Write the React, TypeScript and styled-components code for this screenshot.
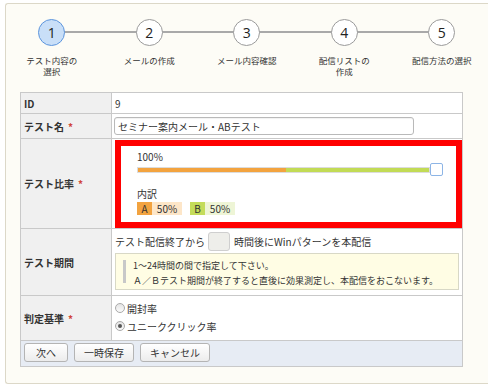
import React from "react";
import styled, { createGlobalStyle } from "styled-components";

const Global = createGlobalStyle`
  html, body { margin: 0; padding: 0; background: #ffffff; overflow: hidden; }
  body {
    font-family: "Noto Sans CJK JP", "Noto Sans", sans-serif;
    color: #333333;
  }
  * { box-sizing: border-box; }
`;

const Panel = styled.div`
  margin: 3px 0 0 5px;
  width: 483px;
  height: 381px;
  border: 1px solid #dcd8c8;
  border-right: none;
  border-radius: 3px 0 0 3px;
  background: #fdfcf6;
`;

const Steps = styled.ol`
  list-style: none;
  margin: 0 0 0 -3px;
  padding: 14.5px 0 0;
  height: 88px;
  display: grid;
  grid-template-columns: repeat(5, 97.5px);
`;

const Step = styled.li<{ $last?: boolean }>`
  position: relative;
  display: flex;
  flex-direction: column;
  align-items: center;
  &::after {
    content: "";
    display: ${(p) => (p.$last ? "none" : "block")};
    position: absolute;
    top: 12.5px;
    left: 50%;
    width: 100%;
    height: 2px;
    background: #a9a9a9;
  }
`;

const Circle = styled.div<{ $active?: boolean }>`
  position: relative;
  z-index: 1;
  width: 27px;
  height: 27px;
  border-radius: 50%;
  border: 1.5px solid ${(p) => (p.$active ? "#5d95dd" : "#9a9a9a")};
  background: ${(p) => (p.$active ? "#c9dff8" : "#ffffff")};
  display: flex;
  align-items: center;
  justify-content: center;
  font-family: "Open Sans", "Noto Sans", sans-serif;
  font-size: 14px;
  color: #222;
`;

const StepLabel = styled.div`
  margin-top: 9px;
  font-size: 8.5px;
  line-height: 11px;
  text-align: center;
  color: #333;
`;

const Table = styled.div`
  margin-left: 14px;
  width: 443px;
  display: grid;
  grid-template-columns: 91px 351px;
  grid-template-rows: 21px 25px 90px 67px 45px 26px;
  border-top: 1px solid #c9c9c9;
  border-left: 1px solid #c9c9c9;
  background: #ffffff;
  font-size: 10px;
`;

const Label = styled.div`
  background: #f0f0f0;
  border-right: 1px solid #c9c9c9;
  border-bottom: 1px solid #c9c9c9;
  padding-left: 3px;
  display: flex;
  align-items: center;
  font-weight: bold;
  color: #333;
`;

const Req = styled.span`
  color: #d0443a;
  margin-left: 4px;
  font-weight: bold;
`;

const Value = styled.div<{ $pad?: string; $center?: boolean }>`
  border-right: 1px solid #c9c9c9;
  border-bottom: 1px solid #c9c9c9;
  padding: ${(p) => p.$pad || "0 0 0 3px"};
  display: flex;
  flex-direction: column;
  justify-content: ${(p) => (p.$center ? "center" : "flex-start")};
`;

const TextInput = styled.div`
  width: 300px;
  height: 18px;
  margin-left: -1px;
  border: 1px solid #b9b9b9;
  border-radius: 3px;
  padding-left: 3px;
  display: flex;
  align-items: center;
  background: #fff;
  box-shadow: inset 0 1px 1px rgba(0, 0, 0, 0.06);
`;

const Highlight = styled.div`
  height: 88px;
  border: 6px solid #ff0000;
  padding: 4px 0 0 16px;
`;

const Line = styled.div<{ $mt?: number }>`
  line-height: 13px;
  margin-top: ${(p) => p.$mt || 0}px;
`;

const SliderRow = styled.div`
  display: flex;
  align-items: center;
  height: 13px;
`;

const Track = styled.div`
  width: 293px;
  height: 6px;
  border: 1px solid #dcdcdc;
  display: flex;
  overflow: hidden;
`;

const Fill = styled.div<{ $color: string }>`
  height: 100%;
  background: ${(p) => p.$color};
`;

const Handle = styled.div`
  width: 13px;
  height: 13px;
  border: 1.5px solid #8db5e6;
  border-radius: 2px;
  background: #fff;
`;

const Tags = styled.div`
  display: flex;
  gap: 8px;
  margin-top: 2px;
  height: 13px;
`;

const Tag = styled.div`
  display: flex;
  height: 13px;
  line-height: 13px;
`;

const TagKey = styled.span<{ $color: string }>`
  width: 15px;
  text-align: center;
  background: ${(p) => p.$color};
  color: #333;
`;

const TagVal = styled.span<{ $color: string }>`
  width: 30px;
  text-align: center;
  background: ${(p) => p.$color};
`;

const PeriodLine = styled.div`
  display: flex;
  align-items: center;
  height: 19px;
`;

const SmallBox = styled.div`
  width: 22px;
  height: 19px;
  margin: 0 4px 0 3px;
  border: 1px solid #cfcfcf;
  border-radius: 3px;
  background: #eeeeea;
`;

const Note = styled.div`
  margin-top: 2px;
  width: 344px;
  height: 37px;
  border: 1px solid #d8d8c6;
  background: #fffde4;
  display: flex;
  padding: 4px 0 0 7px;
`;

const NoteBar = styled.div`
  width: 3px;
  height: 23px;
  margin-top: 2px;
  background: #c8c8c8;
`;

const NoteText = styled.div`
  margin-left: 7px;
  font-size: 9px;
  line-height: 15px;
`;

const RadioLine = styled.label`
  display: flex;
  align-items: center;
  height: 18px;
  gap: 2px;
`;

const Radio = styled.span<{ $checked?: boolean }>`
  width: 10px;
  height: 10px;
  border-radius: 50%;
  border: 1px solid #a9a9a9;
  background: linear-gradient(#e4e4e4, #fafafa);
  display: flex;
  align-items: center;
  justify-content: center;
  &::after {
    content: "";
    display: ${(p) => (p.$checked ? "block" : "none")};
    width: 4px;
    height: 4px;
    border-radius: 50%;
    background: #555;
  }
`;

const ButtonBar = styled.div`
  grid-column: 1 / 3;
  background: #e7ecf4;
  border-right: 1px solid #c9c9c9;
  border-bottom: 1px solid #c9c9c9;
  padding: 2px 0 0 3px;
  display: flex;
  gap: 6px;
  align-items: flex-start;
`;

const Button = styled.button`
  height: 19px;
  min-width: 44px;
  padding: 0 9px;
  border: 1px solid #b4b4b4;
  border-radius: 3px;
  background: linear-gradient(#ffffff, #ececec);
  font-family: inherit;
  font-size: 10px;
  line-height: 17px;
  color: #333;
`;

const steps = [
  ["テスト内容の", "選択"],
  ["メールの作成"],
  ["メール内容確認"],
  ["配信リストの", "作成"],
  ["配信方法の選択"],
];

export default function App() {
  return (
    <>
      <Global />
      <Panel>
        <Steps>
          {steps.map((lines, i) => (
            <Step key={i} $last={i === steps.length - 1}>
              <Circle $active={i === 0}>{i + 1}</Circle>
              <StepLabel>
                {lines.map((l, j) => (
                  <div key={j}>{l}</div>
                ))}
              </StepLabel>
            </Step>
          ))}
        </Steps>
        <Table>
          <Label>ID</Label>
          <Value $center>9</Value>
          <Label>
            テスト名<Req>*</Req>
          </Label>
          <Value $center $pad="0 0 0 3px">
            <TextInput>セミナー案内メール・ABテスト</TextInput>
          </Value>
          <Label>
            テスト比率<Req>*</Req>
          </Label>
          <Value $pad="1px 0 0 3px">
            <Highlight>
              <Line>100%</Line>
              <SliderRow>
                <Track>
                  <Fill $color="#f3a33f" style={{ width: "51%" }} />
                  <Fill $color="#c2db55" style={{ width: "49%" }} />
                </Track>
                <Handle />
              </SliderRow>
              <Line $mt={11}>内訳</Line>
              <Tags>
                <Tag>
                  <TagKey $color="#f2a340">A</TagKey>
                  <TagVal $color="#fde6c8">50%</TagVal>
                </Tag>
                <Tag>
                  <TagKey $color="#c4dc5a">B</TagKey>
                  <TagVal $color="#eef5d6">50%</TagVal>
                </Tag>
              </Tags>
            </Highlight>
          </Value>
          <Label>テスト期間</Label>
          <Value $pad="3px 0 0 3px">
            <PeriodLine>
              テスト配信終了から
              <SmallBox />
              時間後にWinパターンを本配信
            </PeriodLine>
            <Note>
              <NoteBar />
              <NoteText>
                <div>1～24時間の間で指定して下さい。</div>
                <div>Ａ／Ｂテスト期間が終了すると直後に効果測定し、本配信をおこないます。</div>
              </NoteText>
            </Note>
          </Value>
          <Label>
            判定基準<Req>*</Req>
          </Label>
          <Value $pad="3px 0 0 3px">
            <RadioLine>
              <Radio />
              開封率
            </RadioLine>
            <RadioLine>
              <Radio $checked />
              ユニーククリック率
            </RadioLine>
          </Value>
          <ButtonBar>
            <Button>次へ</Button>
            <Button>一時保存</Button>
            <Button>キャンセル</Button>
          </ButtonBar>
        </Table>
      </Panel>
    </>
  );
}
